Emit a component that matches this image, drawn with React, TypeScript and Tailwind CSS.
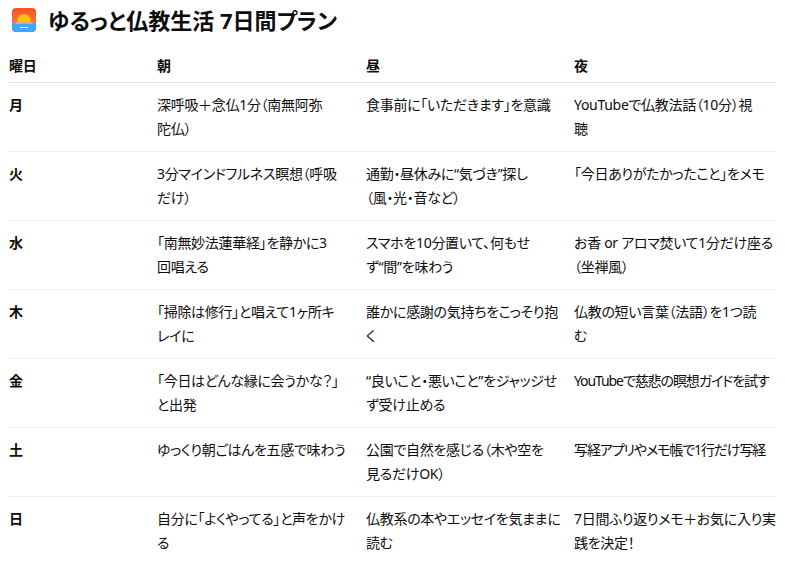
import React from "react";

type Row = { day: string; morning: string[]; noon: string[]; night: string[] };

const ROWS: Row[] = [
  {
    day: "月",
    morning: ["深呼吸＋念仏1分（南無阿弥", "陀仏）"],
    noon: ["食事前に「いただきます」を意識"],
    night: ["YouTubeで仏教法話（10分）視", "聴"],
  },
  {
    day: "火",
    morning: ["3分マインドフルネス瞑想（呼吸", "だけ）"],
    noon: ["通勤・昼休みに“気づき”探し", "（風・光・音など）"],
    night: ["「今日ありがたかったこと」をメモ"],
  },
  {
    day: "水",
    morning: ["「南無妙法蓮華経」を静かに3", "回唱える"],
    noon: ["スマホを10分置いて、何もせ", "ず“間”を味わう"],
    night: ["お香 or アロマ焚いて1分だけ座る", "（坐禅風）"],
  },
  {
    day: "木",
    morning: ["「掃除は修行」と唱えて1ヶ所キ", "レイに"],
    noon: ["誰かに感謝の気持ちをこっそり抱", "く"],
    night: ["仏教の短い言葉（法語）を1つ読", "む"],
  },
  {
    day: "金",
    morning: ["「今日はどんな縁に会うかな？」", "と出発"],
    noon: ["“良いこと・悪いこと”をジャッジせ", "ず受け止める"],
    night: ["YouTubeで慈悲の瞑想ガイドを試す"],
  },
  {
    day: "土",
    morning: ["ゆっくり朝ごはんを五感で味わう"],
    noon: ["公園で自然を感じる（木や空を", "見るだけOK）"],
    night: ["写経アプリやメモ帳で1行だけ写経"],
  },
  {
    day: "日",
    morning: ["自分に「よくやってる」と声をかけ", "る"],
    noon: ["仏教系の本やエッセイを気ままに", "読む"],
    night: ["7日間ふり返りメモ＋お気に入り実", "践を決定！"],
  },
];

// lines that would run past the page edge with this font
const TIGHT = new Set(["YouTubeで慈悲の瞑想ガイドを試す", "写経アプリやメモ帳で1行だけ写経"]);

// 🌅 drawn by hand, no emoji font in the sandbox
function SunriseIcon() {
  return (
    <svg width="24" height="24" viewBox="0 0 24 24">
      <defs>
        <linearGradient id="sky" x1="0" y1="0" x2="0" y2="1">
          <stop offset="0" stopColor="#f4511e" />
          <stop offset="1" stopColor="#ff8a50" />
        </linearGradient>
        <clipPath id="box">
          <rect x="0" y="0" width="24" height="24" rx="4" />
        </clipPath>
      </defs>
      <g clipPath="url(#box)">
        <rect width="24" height="24" fill="url(#sky)" />
        <circle cx="12" cy="13" r="7" fill="#ffc107" />
        <rect y="14.5" width="24" height="9.5" fill="#42a5f5" />
        <rect x="3" y="14.5" width="18" height="1.2" fill="#ffb74d" />
        <rect x="8" y="19" width="8" height="1.1" rx="0.5" fill="#e3f2fd" />
      </g>
    </svg>
  );
}

function Lines({ lines }: { lines: string[] }) {
  return (
    <>
      {lines.map((l, i) => (
        <div key={i} className={TIGHT.has(l) ? "whitespace-nowrap tracking-[-1.1px]" : "whitespace-nowrap"}>
          {l}
        </div>
      ))}
    </>
  );
}

export default function App() {
  return (
    <div
      className="min-h-screen bg-white px-2 text-[#0d0d0d] [font-feature-settings:'palt']"
      style={{ fontFamily: '"Noto Sans", "Noto Sans CJK JP", sans-serif' }}
    >
      <div className="flex h-[40px] items-center gap-[12px] pl-[4px] mb-[6px]">
        <SunriseIcon />
        <h1 className="text-[22px] font-bold leading-none">ゆるっと仏教生活 7日間プラン</h1>
      </div>

      <table className="w-[768px] table-fixed border-collapse text-[14px] leading-[24px] tracking-[-0.3px]">
        <colgroup>
          <col className="w-[149px]" />
          <col className="w-[209px]" />
          <col className="w-[208px]" />
          <col className="w-[202px]" />
        </colgroup>
        <thead>
          <tr className="border-b border-[#e3e3e3] text-left">
            <th className="pt-[8px] pb-[4px] pl-[1px] font-bold">曜日</th>
            <th className="pt-[8px] pb-[4px] font-bold">朝</th>
            <th className="pt-[8px] pb-[4px] font-bold">昼</th>
            <th className="pt-[8px] pb-[4px] font-bold">夜</th>
          </tr>
        </thead>
        <tbody>
          {ROWS.map((r, i) => (
            <tr
              key={r.day}
              className={i < ROWS.length - 1 ? "border-b border-[#f0f0f0] align-top" : "align-top"}
            >
              <td className="py-[10px] pl-[1px] font-bold">{r.day}</td>
              <td className="py-[10px]">
                <Lines lines={r.morning} />
              </td>
              <td className="py-[10px]">
                <Lines lines={r.noon} />
              </td>
              <td className="py-[10px]">
                <Lines lines={r.night} />
              </td>
            </tr>
          ))}
        </tbody>
      </table>
    </div>
  );
}
